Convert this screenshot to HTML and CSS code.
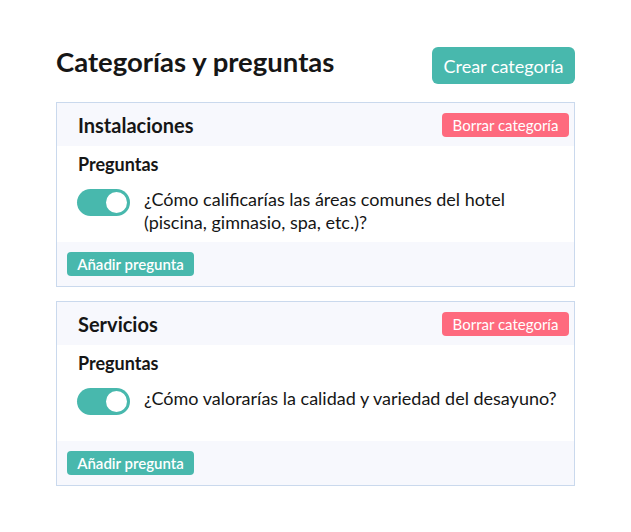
FILE: index.html
```html
<!DOCTYPE html>
<html lang="es">
<head>
  <meta charset="UTF-8" />
  <meta name="viewport" content="width=device-width, initial-scale=1.0"/>
  <title>Categorías y preguntas</title>
  <link rel="stylesheet" href="styles.css">
</head>
<body>

  <div class="page">
    <div class="page-header">
      <h1>Categorías y preguntas</h1>
      <button class="btn btn-create">Crear categoría</button>
    </div>

    <!-- Categoria: Instalaciones -->
    <div class="category">
      <div class="category-header">
        <h2>Instalaciones</h2>
        <button class="btn btn-delete">Borrar categoría</button>
      </div>
      <div class="category-body">
        <h3>Preguntas</h3>
        <div class="question">
          <span class="toggle"><span class="knob"></span></span>
          <p>¿Cómo calificarías las áreas comunes del hotel (piscina, gimnasio, spa, etc.)?</p>
        </div>
      </div>
      <div class="category-footer">
        <button class="btn btn-add">Añadir pregunta</button>
      </div>
    </div>

    <!-- Categoria: Servicios -->
    <div class="category">
      <div class="category-header">
        <h2>Servicios</h2>
        <button class="btn btn-delete">Borrar categoría</button>
      </div>
      <div class="category-body">
        <h3>Preguntas</h3>
        <div class="question">
          <span class="toggle"><span class="knob"></span></span>
          <p>¿Cómo valorarías la calidad y variedad del desayuno?</p>
        </div>
      </div>
      <div class="category-footer">
        <button class="btn btn-add">Añadir pregunta</button>
      </div>
    </div>
  </div>

</body>
</html>
```

FILE: styles.css
```css
body {
  margin: 0;
  font-family: Lato, "Open Sans", sans-serif;
  color: #161616;
  background: white;
}
.page {
  width: 519px;
  margin: 0 auto;
  padding-top: 47px;
}
.page-header {
  display: flex;
  justify-content: space-between;
  align-items: flex-start;
  margin-bottom: 18px;
}
h1 {
  margin: 1px 0 0;
  font-size: 27.5px;
  line-height: 27px;
  font-weight: 700;
}
.btn {
  border: none;
  color: white;
  font-family: inherit;
  cursor: pointer;
}
.btn-create {
  height: 37px;
  width: 143px;
  padding: 0;
  font-size: 18px;
  border-radius: 6px;
  background: #48b8ad;
}
.btn-delete, .btn-add {
  height: 24px;
  width: 127px;
  padding: 0;
  font-size: 15px;
  border-radius: 4px;
}
.btn-delete {
  background: #fe6a7e;
}
.btn-add {
  background: #48b8ad;
  font-weight: 600;
}
.category {
  border: 1px solid #cad9ed;
  margin-bottom: 14px;
}
.category-header {
  height: 43px;
  display: flex;
  justify-content: space-between;
  align-items: center;
  padding: 0 5px 0 21px;
  background: #f7f8fd;
}
h2 {
  margin: 0;
  font-size: 20px;
  font-weight: 700;
}
.category-body {
  box-sizing: border-box;
  min-height: 96px;
  padding: 7px 8px 8px 21px;
}
h3 {
  margin: 0 0 13px;
  font-size: 18px;
  line-height: 22px;
  font-weight: 700;
}
.question {
  display: flex;
  align-items: flex-start;
  gap: 14px;
}
.question p {
  margin: 0;
  font-size: 18px;
  line-height: 23px;
}
.toggle {
  flex: none;
  width: 53px;
  height: 27px;
  border-radius: 14px;
  background: #48b8ad;
  position: relative;
  margin: 1px 0 0 -1px;
}
.knob {
  position: absolute;
  right: 1px;
  top: 1px;
  width: 21px;
  height: 21px;
  border: 2px solid #48b8ad;
  border-radius: 50%;
  background: white;
}
.category-footer {
  padding: 10px;
  background: #f7f8fd;
}
```
